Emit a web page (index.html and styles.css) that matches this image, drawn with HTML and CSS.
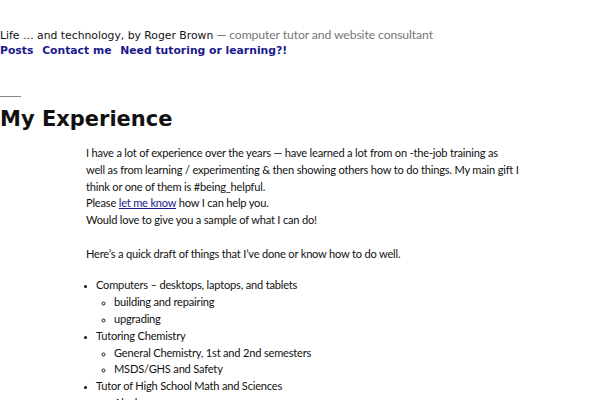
FILE: index.html
```html
<!DOCTYPE html>
<html>
<head>
<meta charset="utf-8">
<link rel="stylesheet" href="styles.css">
</head>
<body>
<header class="site-header">
  <p class="site-title"><span class="site-name">Life … and technology, by Roger Brown</span> <span class="site-desc">— computer tutor and website consultant</span></p>
  <nav class="site-nav">
    <a href="#">Posts</a>
    <a href="#">Contact me</a>
    <a href="#">Need tutoring or learning?!</a>
  </nav>
</header>
<main class="content">
  <hr class="sep">
  <h1 class="title">My Experience</h1>
  <div class="entry">
    <p>I have a lot of experience over the years — have learned a lot from on -the-job training as well as from learning / experimenting &amp; then showing others how to do things. My main gift I think or one of them is #being_helpful.<br>Please <a href="#">let me know</a> how I can help you.<br>Would love to give you a sample of what I can do!</p>
    <p>Here’s a quick draft of things that I’ve done or know how to do well.</p>
    <ul>
      <li>Computers – desktops, laptops, and tablets
        <ul>
          <li>building and repairing</li>
          <li>upgrading</li>
        </ul>
      </li>
      <li>Tutoring Chemistry
        <ul>
          <li>General Chemistry, 1st and 2nd semesters</li>
          <li>MSDS/GHS and Safety</li>
        </ul>
      </li>
      <li>Tutor of High School Math and Sciences
        <ul>
          <li>Algebra</li>
        </ul>
      </li>
    </ul>
  </div>
</main>
</body>
</html>
```
FILE: styles.css
```css
html, body { margin: 0; padding: 0; background: #fff; }
body { color: #111; }
.site-header { padding-top: 27px; font-family: "DejaVu Sans", sans-serif; }
.site-title { margin: 0; font-size: 10.8px; line-height: 15px; color: #111; }
.site-desc { color: #767676; font-family: Lato, sans-serif; font-size: 12.2px; letter-spacing: -0.1px; }
.site-nav { font-size: 10.8px; font-weight: bold; line-height: 15px; }
.site-nav a { color: #1a1a8c; text-decoration: none; margin-right: 5px; }
.content { padding-top: 38px; }
.sep { width: 21px; margin: 0; border: 0; border-top: 1px solid #888; }
.title { margin: 9px 0 0; font-family: "DejaVu Sans", sans-serif; font-size: 21px; line-height: 26px; font-weight: bold; color: #111; }
.entry { margin-left: 86px; margin-top: 13px; font-family: Lato, sans-serif; font-size: 11.1px; letter-spacing: -0.2px; line-height: 16.8px; color: #111; width: 433px; }
.entry p { margin: 0 0 16.8px; }
.entry a { color: #1a1a8c; }
.entry ul { margin: -2px 0 0; padding-left: 10px; }
.entry li::marker { font-size: 8px; }
.entry ul ul { margin: 0; padding-left: 18px; list-style: circle; }
```
